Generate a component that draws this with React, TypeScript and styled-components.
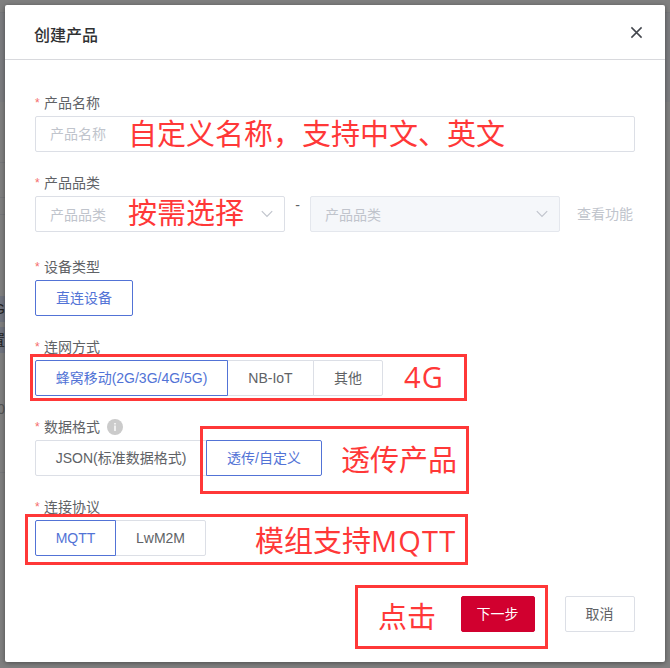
import React from 'react';
import styled, { createGlobalStyle, css } from 'styled-components';

const Global = createGlobalStyle`
  *, *::before, *::after { box-sizing: border-box; }
  html, body { margin: 0; padding: 0; overflow: hidden; }
  body {
    background: #7f7f7f;
    font-family: 'Liberation Sans', 'Noto Sans CJK SC', sans-serif;
    font-size: 14px;
    color: #606266;
  }
  button, input { font-family: inherit; }
`;

const Backdrop = styled.div`
  position: relative;
  width: 670px;
  height: 668px;
  padding: 5px 5px 6px;
  background: linear-gradient(#7f7f7f 0 12px, #77787b 12px 13px, #7b7c7f 13px 102px, #7f7f7f 102px);
  overflow: hidden;
`;

const PageEdge = styled.div`
  position: absolute;
  left: 0;
  top: 0;
  width: 5px;
  height: 668px;
  overflow: hidden;
`;

const EdgeLine = styled.i<{ $y: number }>`
  position: absolute;
  left: 0;
  top: ${(p) => p.$y}px;
  width: 5px;
  height: 1px;
  background: #76777a;
`;

const EdgeCell = styled.span<{ $y: number; $plain?: boolean }>`
  position: absolute;
  left: 0;
  top: ${(p) => p.$y}px;
  width: 5px;
  height: 26px;
  line-height: 26px;
  background: ${(p) => (p.$plain ? 'transparent' : '#70747f')};
  color: ${(p) => (p.$plain ? '#555' : '#222')};
  display: flex;
  justify-content: flex-end;
  font-size: 14px;
`;

const Dialog = styled.section`
  position: relative;
  width: 660px;
  height: 657px;
  background: #fff;
  border-radius: 2px;
  box-shadow: 0 1px 5px rgba(0, 0, 0, 0.4);
  display: flex;
  flex-direction: column;
`;

const Header = styled.header`
  height: 55px;
  flex: none;
  padding: 7px 22px 0 29px;
  border-bottom: 1px solid #d8d9dd;
  display: flex;
  align-items: center;
  justify-content: space-between;
`;

const Title = styled.h1`
  margin: 0;
  font-size: 16px;
  line-height: 24px;
  font-weight: 500;
  color: #303133;
`;

const CloseButton = styled.button`
  width: 13px;
  height: 13px;
  margin-top: -6px;
  padding: 0;
  border: 0;
  background: none;
  color: #43464d;
  display: flex;
`;

const Form = styled.form`
  flex: 1;
  padding: 33px 30px 0;
  display: flex;
  flex-direction: column;
`;

const Field = styled.div<{ $gap?: number }>`
  display: flex;
  flex-direction: column;
  margin-bottom: ${(p) => p.$gap ?? 21}px;
`;

const Label = styled.label`
  height: 23px;
  line-height: 20px;
  display: flex;
  gap: 4px;
  &::before {
    content: '*';
    width: 5px;
    font-size: 12px;
    color: #f56c6c;
  }
`;

const Info = styled.span`
  width: 16px;
  height: 16px;
  margin: 2px 0 0 3px;
  display: flex;
`;

const Controls = styled.div`
  display: flex;
  height: 36px;
`;

const Box = css`
  height: 36px;
  border: 1px solid #dcdfe6;
  border-radius: 2px;
`;

const TextInput = styled.input`
  ${Box}
  width: 600px;
  padding: 0 14px;
  font-size: 14px;
  outline: none;
  &::placeholder { color: #c0c4cc; opacity: 1; }
`;

const Select = styled.div<{ $disabled?: boolean }>`
  ${Box}
  width: 250px;
  padding: 0 10px 0 14px;
  display: flex;
  align-items: center;
  justify-content: space-between;
  color: #c0c4cc;
  background: ${(p) => (p.$disabled ? '#f5f7fa' : '#fff')};
  border-color: ${(p) => (p.$disabled ? '#e4e7ed' : '#dcdfe6')};
`;

const Dash = styled.span`
  width: 25px;
  line-height: 18px;
  text-align: center;
`;

const ViewLink = styled.span`
  margin-left: 17px;
  line-height: 36px;
  color: #c0c4cc;
`;

const Option = styled.button<{ $w: number; $active?: boolean }>`
  ${Box}
  position: relative;
  z-index: ${(p) => (p.$active ? 1 : 0)};
  width: ${(p) => p.$w}px;
  margin-left: -1px;
  padding: 0;
  flex: none;
  font-size: 14px;
  line-height: 34px;
  white-space: nowrap;
  background: #fff;
  color: ${(p) => (p.$active ? '#5273d6' : '#606266')};
  border-color: ${(p) => (p.$active ? '#5273d6' : '#dcdfe6')};
  border-radius: 0;
  &:first-child {
    margin-left: 0;
    border-top-left-radius: 2px;
    border-bottom-left-radius: 2px;
  }
  &:last-child {
    border-top-right-radius: 2px;
    border-bottom-right-radius: 2px;
  }
`;

const Footer = styled.footer`
  height: 66px;
  padding-right: 30px;
  display: flex;
  justify-content: flex-end;
  gap: 30px;
`;

const Action = styled.button<{ $primary?: boolean }>`
  ${Box}
  width: ${(p) => (p.$primary ? 74 : 70)}px;
  padding: 0 1px 0 0;
  font-size: 14px;
  line-height: 34px;
  background: ${(p) => (p.$primary ? '#d1002f' : '#fff')};
  border-color: ${(p) => (p.$primary ? '#d1002f' : '#dcdfe6')};
  color: ${(p) => (p.$primary ? '#fff' : '#606266')};
`;

const Frame = styled.div<{ $x: number; $y: number; $w: number; $h: number }>`
  position: absolute;
  z-index: 2;
  left: ${(p) => p.$x}px;
  top: ${(p) => p.$y}px;
  width: ${(p) => p.$w}px;
  height: ${(p) => p.$h}px;
  border: 3px solid #ff3838;
  pointer-events: none;
`;

const Note = styled.span<{ $x: number; $y: number }>`
  position: absolute;
  z-index: 2;
  left: ${(p) => p.$x}px;
  top: ${(p) => p.$y}px;
  font-family: 'Open Sans', 'Noto Sans CJK SC', sans-serif;
  font-size: 29px;
  line-height: 40px;
  white-space: nowrap;
  color: #ff3838;
  pointer-events: none;
`;

const Latin = styled.span`
  letter-spacing: 1.2px;
`;

const Chevron = () => (
  <svg width="14" height="14" viewBox="0 0 14 14" fill="none" stroke="#c0c4cc" strokeWidth="1.2">
    <path d="M1.8 4.2 7 9.4l5.2-5.2" />
  </svg>
);

const frames = [
  [30, 354, 437, 47],
  [200, 426, 269, 68],
  [25, 514, 443, 51],
  [355, 585, 193, 64],
];

const notes: { x: number; y: number; text: string; latin?: string }[] = [
  { x: 128, y: 114, text: '自定义名称，支持中文、英文' },
  { x: 128, y: 193, text: '按需选择' },
  { x: 404, y: 357, text: '', latin: '4G' },
  { x: 341, y: 440, text: '透传产品' },
  { x: 255, y: 521, text: '模组支持', latin: 'MQTT' },
  { x: 378, y: 597, text: '点击' },
];

export default function App() {
  return (
    <>
      <Global />
      <Backdrop>
        <PageEdge>
          {[162, 197, 214, 472].map((y) => (
            <EdgeLine key={y} $y={y} />
          ))}
          <EdgeCell $y={296}>G</EdgeCell>
          <EdgeCell $y={327}>置</EdgeCell>
          <EdgeCell $y={396} $plain>0</EdgeCell>
        </PageEdge>
        <Dialog>
          <Header>
            <Title>创建产品</Title>
            <CloseButton aria-label="关闭">
              <svg width="13" height="13" viewBox="0 0 13 13" stroke="currentColor" strokeWidth="1.5">
                <path d="M1.4 1.4 11.6 11.6M11.6 1.4 1.4 11.6" />
              </svg>
            </CloseButton>
          </Header>
          <Form>
            <Field>
              <Label>产品名称</Label>
              <TextInput placeholder="产品名称" />
            </Field>
            <Field $gap={25}>
              <Label>产品品类</Label>
              <Controls>
                <Select>产品品类<Chevron /></Select>
                <Dash>-</Dash>
                <Select $disabled>产品品类<Chevron /></Select>
                <ViewLink>查看功能</ViewLink>
              </Controls>
            </Field>
            <Field>
              <Label>设备类型</Label>
              <Controls>
                <Option type="button" $w={98} $active>直连设备</Option>
              </Controls>
            </Field>
            <Field>
              <Label>连网方式</Label>
              <Controls>
                <Option type="button" $w={193} $active>蜂窝移动(2G/3G/4G/5G)</Option>
                <Option type="button" $w={87}>NB-IoT</Option>
                <Option type="button" $w={70}>其他</Option>
              </Controls>
            </Field>
            <Field>
              <Label>
                数据格式
                <Info>
                  <svg width="16" height="16" viewBox="0 0 16 16">
                    <circle cx="8" cy="8" r="8" fill="#cbcbcb" />
                    <path d="M7.3 4h1.4v1.5H7.3zM7.3 6.6h1.4V12H7.3z" fill="#fff" />
                  </svg>
                </Info>
              </Label>
              <Controls>
                <Option type="button" $w={172}>JSON(标准数据格式)</Option>
                <Option type="button" $w={116} $active>透传/自定义</Option>
              </Controls>
            </Field>
            <Field>
              <Label>连接协议</Label>
              <Controls>
                <Option type="button" $w={81} $active>MQTT</Option>
                <Option type="button" $w={91}>LwM2M</Option>
              </Controls>
            </Field>
          </Form>
          <Footer>
            <Action type="button" $primary>下一步</Action>
            <Action type="button">取消</Action>
          </Footer>
        </Dialog>
        {frames.map(([x, y, w, h]) => (
          <Frame key={y} $x={x} $y={y} $w={w} $h={h} />
        ))}
        {notes.map(({ x, y, text, latin }) => (
          <Note key={y} $x={x} $y={y}>
            {text}
            {latin && <Latin>{latin}</Latin>}
          </Note>
        ))}
      </Backdrop>
    </>
  );
}
